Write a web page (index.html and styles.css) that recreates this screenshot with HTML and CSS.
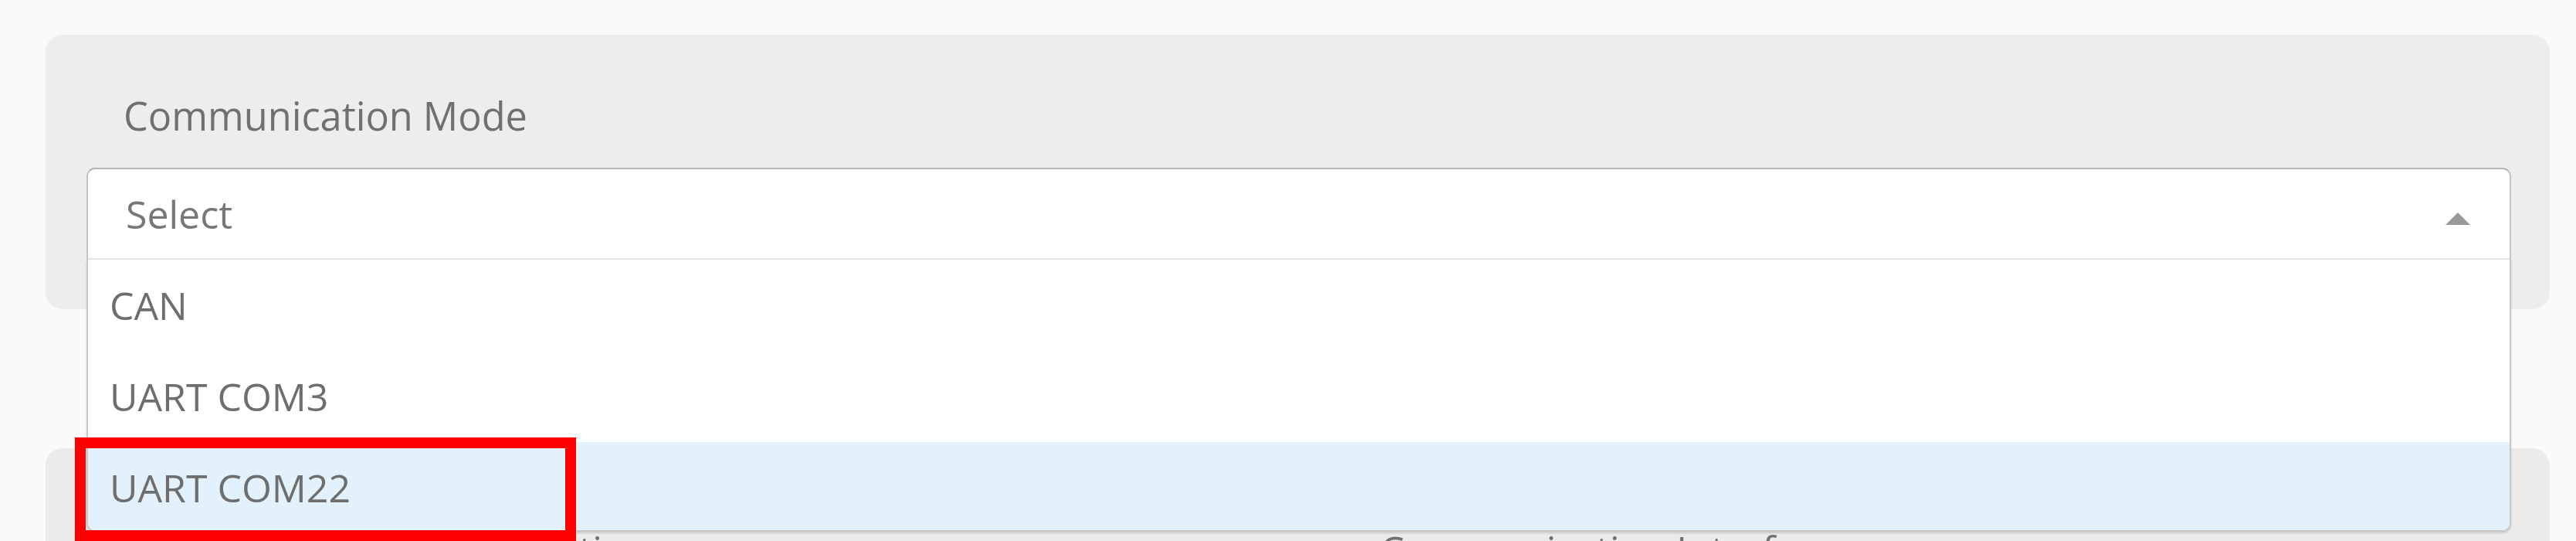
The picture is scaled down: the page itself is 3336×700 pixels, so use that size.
FILE: index.html
```html
<!DOCTYPE html>
<html lang="en">
<head>
<meta charset="utf-8">
<title>Communication Mode</title>
<link rel="stylesheet" href="styles.css">
</head>
<body>
<div class="page">
  <section class="card card-top">
    <div class="field-label">Communication Mode</div>
    <div class="select">
      <div class="select-head">
        <span class="select-value">Select</span>
        <svg class="caret" width="32" height="16" viewBox="0 0 32 16" aria-hidden="true"><polygon points="0,16 16,0 32,16" fill="#999999"/></svg>
      </div>
      <ul class="menu">
        <li class="option">CAN</li>
        <li class="option">UART COM3</li>
        <li class="option option-active">UART COM22</li>
      </ul>
    </div>
  </section>
  <section class="card card-second">
    <div class="field-label-plain">Firmware Image File Location</div>
    <div class="field-label-plain">Communication Interface</div>
  </section>
  <div class="highlight-box"></div>
</div>
</body>
</html>
```

FILE: styles.css
```css
html, body {
  margin: 0;
  padding: 0;
  background: #fafafa;
  font-family: "Open Sans", "Noto Sans", "Liberation Sans", sans-serif;
  overflow: hidden;
}

.page {
  position: relative;
  width: 3336px;
  height: 700px;
  box-sizing: border-box;
  padding: 45px 34px 0 59px;
  overflow: hidden;
}

.card {
  background: #ededed;
  border-radius: 22px;
}

.card-top {
  position: relative;
  z-index: 2;
  padding: 71px 50px 64px 53px;
}

.field-label {
  font-size: 50.5px;
  line-height: 68px;
  color: #707070;
  padding-left: 48px;
  margin-bottom: 33px;
}

.select {
  position: relative;
  background: #ffffff;
  border: 2px solid #c4c4c4;
  border-top-color: #b4b4b4;
  border-bottom: none;
  border-radius: 11px 11px 0 0;
}

.select-head {
  height: 115px;
  display: flex;
  align-items: center;
  justify-content: space-between;
  padding: 0 51px 0 49px;
  border-bottom: 2px solid #e4e4e4;
}

.select-value {
  font-size: 50px;
  line-height: 68px;
  color: #777777;
}

.caret {
  display: block;
  margin-top: 12px;
}

.menu {
  position: absolute;
  top: 100%;
  left: -2px;
  right: -2px;
  margin: 0;
  padding: 0;
  list-style: none;
  background: #ffffff;
  border: 2px solid #c8c8c8;
  border-top: none;
  border-radius: 0 0 11px 11px;
  box-shadow: 0 2px 3px rgba(0, 0, 0, 0.14);
  height: 350px;
  overflow: hidden;
}

.option {
  height: 118px;
  display: flex;
  align-items: center;
  padding-left: 28px;
  font-size: 50px;
  line-height: 68px;
  color: #6e6e6e;
}

.option-active {
  background: #e3f1fd;
}

.card-second {
  margin-top: 180px;
  height: 300px;
  box-sizing: border-box;
  padding: 97px 50px 0 101px;
  display: grid;
  grid-template-columns: 1627px auto;
  align-items: start;
  background: #ebebeb;
}

.field-label-plain {
  font-size: 50px;
  line-height: 68px;
  color: #707070;
  white-space: nowrap;
}

.highlight-box {
  position: absolute;
  z-index: 5;
  left: 97px;
  top: 566px;
  width: 649px;
  height: 134px;
  box-sizing: border-box;
  border: 14px solid #ff0000;
}
```
